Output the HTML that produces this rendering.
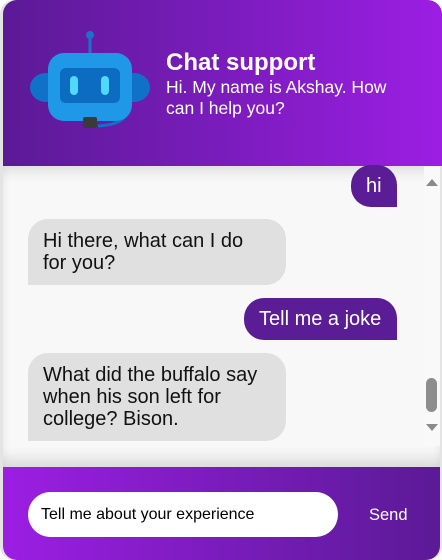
<!DOCTYPE html>
<html><head><meta charset="utf-8"><style>
*{margin:0;padding:0;box-sizing:border-box}
html,body{width:442px;height:560px;overflow:hidden;background:#fff;font-family:"Liberation Sans",Arial,sans-serif}
.wrap{position:absolute;left:0;top:0;width:442px;height:560px;border-radius:14px;overflow:hidden;background:#e4e4e4}
.head{position:absolute;left:3px;top:0;width:439px;height:166px;background:linear-gradient(90deg,#5b1a96 0%,#7a1cbc 50%,#9c1ee3 100%);border-radius:14px 14px 0 0}
.title{position:absolute;left:163px;top:49px;color:#fff;font-weight:bold;font-size:24px}
.sub{position:absolute;left:163px;top:77px;color:#fff;font-size:17.5px;line-height:21px;width:240px}
.body{position:absolute;left:3px;top:166px;width:437px;height:301px;background:#f8f8f8;box-shadow:inset 0 10px 14px -6px rgba(0,0,0,.12),inset 0 -14px 14px -6px rgba(0,0,0,.12)}
.b{position:absolute;font-size:20px;line-height:22px}
.u{background:#5a1d96;color:#fff;border-radius:20px 20px 0 20px;padding:10px 15px;height:42px}
.bot{background:#e0e0e0;color:#111;border-radius:20px 20px 20px 0;padding:11px 22px 11px 15px;width:258px}
.sb{position:absolute;left:424px;top:166px;width:16px;height:280px;background:#f9f9f9}
.foot{position:absolute;left:3px;top:467px;width:437px;height:93px;background:linear-gradient(90deg,#9c1ee3 0%,#7a1cbc 50%,#5b1a96 100%);border-radius:0 0 14px 14px}
.inp{position:absolute;left:25px;top:25px;width:310px;height:45px;background:#fff;border-radius:23px;font-size:16px;padding:14px 0 0 13px;color:#000}
.send{position:absolute;left:366px;top:39px;color:#fff;font-size:16.5px}
</style></head><body><div class="wrap">
<div class="head">
<svg style="position:absolute;left:17px;top:20px" width="140" height="120" viewBox="20 20 140 120">
<circle cx="90" cy="35" r="4" fill="#1a73c8"/><rect x="88.5" y="36" width="3" height="18" fill="#1a73c8"/>
<ellipse cx="46" cy="87.5" rx="16" ry="14.5" fill="#0f72c8"/><ellipse cx="134" cy="87.5" rx="16" ry="14.5" fill="#0f72c8"/>
<path d="M126 104 q6 20 -28 22" stroke="#0f72c8" stroke-width="3" fill="none"/>
<rect x="48" y="53" width="84" height="68" rx="16" fill="#1f98e8"/>
<rect x="60" y="68" width="60" height="35" rx="6" fill="#0c6cc2"/>
<rect x="70" y="76" width="8" height="19" rx="4" fill="#4fd9ff"/><rect x="101" y="76" width="8" height="19" rx="4" fill="#4fd9ff"/>
<rect x="83" y="117" width="14" height="11" rx="2" fill="#3a3a3a"/>
</svg>
<div class="title">Chat support</div>
<div class="sub">Hi. My name is Akshay. How can I help you?</div>
</div>
<div class="body"></div>
<div class="b u" style="left:351px;top:165px;width:46px">hi</div>
<div class="b bot" style="left:28px;top:219px;height:66px">Hi there, what can I do for you?</div>
<div class="b u" style="left:244px;top:298px;width:153px">Tell me a joke</div>
<div class="b bot" style="left:28px;top:353px;height:88px">What did the buffalo say when his son left for college? Bison.</div>
<div class="sb"></div>
<svg style="position:absolute;left:425px;top:177px" width="14" height="10"><path d="M1 9 L7 2 L13 9Z" fill="#8a8a8a"/></svg>
<div style="position:absolute;left:426px;top:378px;width:11px;height:34px;border-radius:6px;background:#8d8d8d"></div>
<svg style="position:absolute;left:425px;top:423px" width="14" height="10"><path d="M1 1 L7 8 L13 1Z" fill="#8a8a8a"/></svg>
<div class="foot"><div class="inp">Tell me about your experience</div><div class="send">Send</div></div>
</div></body></html>
